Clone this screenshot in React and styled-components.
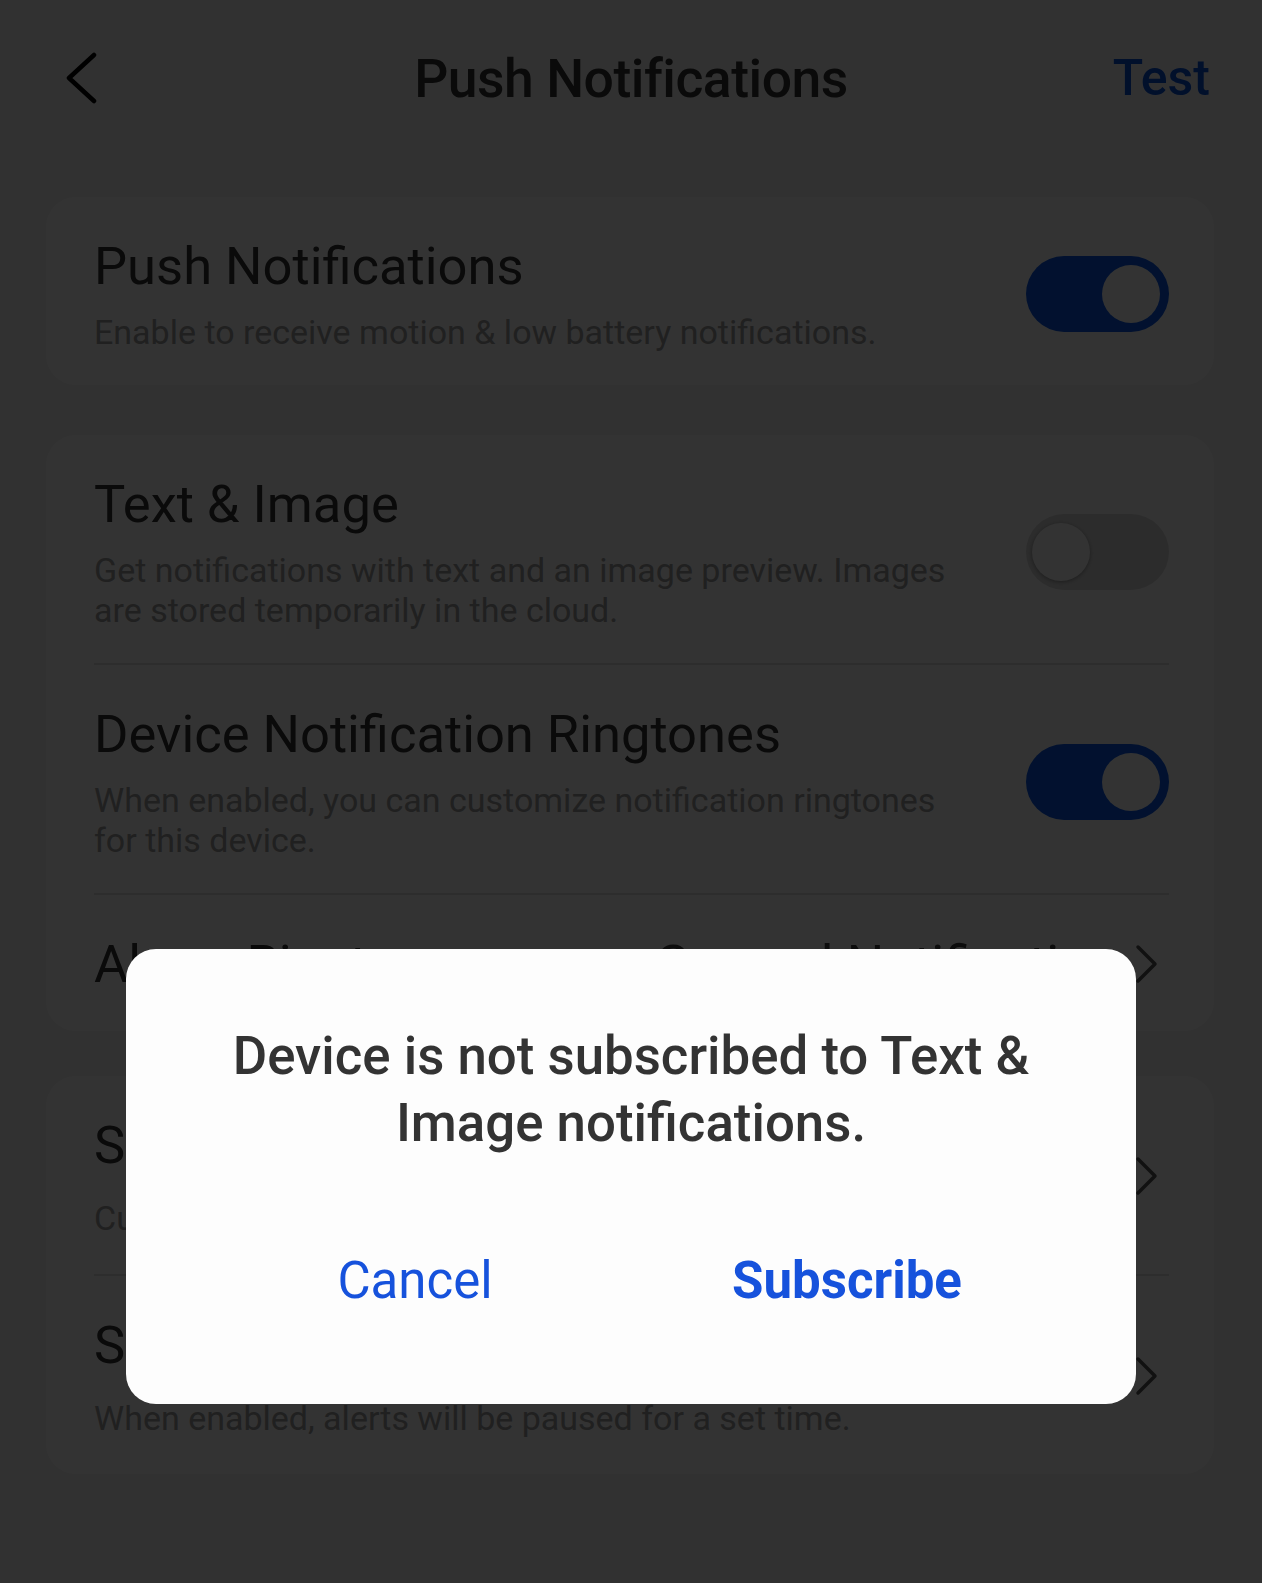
import React from "react";
import styled, { createGlobalStyle } from "styled-components";

const GlobalStyle = createGlobalStyle`
  body {
    margin: 0;
    font-family: Roboto, "Liberation Sans", sans-serif;
  }
`;

const Chevron = ({ left }) => (
  <svg width="36" height="56" viewBox="0 0 36 56" fill="none">
    <path
      d={left ? "M33 5 L8 28 L33 51" : "M8 11 L25 28 L8 45"}
      stroke={left ? "#000" : "#555"}
      strokeWidth={left ? 4.5 : 3.5}
      strokeLinecap="round"
      strokeLinejoin="round"
    />
  </svg>
);

const settings = [
  [
    {
      title: "Push Notifications",
      sub: "Enable to receive motion & low battery notifications.",
      on: true,
    },
  ],
  [
    {
      title: "Text & Image",
      sub: "Get notifications with text and an image preview. Images are stored temporarily in the cloud.",
      on: false,
    },
    {
      title: "Device Notification Ringtones",
      sub: "When enabled, you can customize notification ringtones for this device.",
      on: true,
    },
    { title: "Alarm Ringtone", value: "General Notification", link: true },
  ],
  [
    {
      title: "Schedule",
      sub: "Customize when you receive notifications.",
      link: true,
    },
    {
      title: "Snooze Alerts",
      sub: "When enabled, alerts will be paused for a set time.",
      link: true,
    },
  ],
];

const App = () => {
  return (
    <Page>
      <GlobalStyle />
      <Header>
        <BackButton>
          <Chevron left />
        </BackButton>
        <HeaderTitle>Push Notifications</HeaderTitle>
        <TestButton>Test</TestButton>
      </Header>

      <Content>
        {settings.map((group, i) => (
          <Card key={i} $first={i === 0}>
            {group.map((item) => (
              <Row key={item.title} $link={item.link}>
                <TextCol $gap={item.link ? 22 : 15}>
                  <RowTitle>{item.title}</RowTitle>
                  {item.sub && <RowSub>{item.sub}</RowSub>}
                </TextCol>
                {item.value && <Value>{item.value}</Value>}
                {item.link ? (
                  <ChevronBox>
                    <Chevron />
                  </ChevronBox>
                ) : (
                  <Toggle $on={item.on}>
                    <Knob $on={item.on} />
                  </Toggle>
                )}
              </Row>
            ))}
          </Card>
        ))}
      </Content>

      <Overlay>
        <Dialog>
          <Message>
            Device is not subscribed to Text &amp; Image notifications.
          </Message>
          <Actions>
            <ActionButton>Cancel</ActionButton>
            <ActionButton $primary>Subscribe</ActionButton>
          </Actions>
        </Dialog>
      </Overlay>
    </Page>
  );
};

export default App;

const Page = styled.div`
  position: relative;
  min-height: 1583px;
  background: #f5f5f5;
  overflow: hidden;
`;

const Header = styled.div`
  display: grid;
  grid-template-columns: 1fr auto 1fr;
  align-items: center;
  height: 156px;
  padding: 0 52px;
`;

const BackButton = styled.div`
  display: flex;
  align-items: center;
  margin-left: 9px;
`;

const HeaderTitle = styled.div`
  font-size: 53.5px;
  font-weight: 500;
  color: #333;
  letter-spacing: -0.5px;
`;

const TestButton = styled.div`
  justify-self: end;
  font-size: 50px;
  font-weight: 500;
  color: #0750d8;
`;

const Content = styled.div`
  display: flex;
  flex-direction: column;
  gap: 45px;
  padding: 41px 48px 0 46px;
`;

const Card = styled.div`
  background: #fff;
  border-radius: 30px;
  padding: 0 45px 0 48px;
  margin-bottom: ${(p) => (p.$first ? "5px" : "0")};
`;

const Row = styled.div`
  display: flex;
  align-items: center;
  padding: ${(p) => (p.$link ? "38px 0 36px" : "38px 0 33px")};

  & + & {
    border-top: 2px solid #e2e2e2;
  }
`;

const TextCol = styled.div`
  flex: 1;
  display: flex;
  flex-direction: column;
  gap: ${(p) => p.$gap}px;
  margin-right: 60px;
`;

const RowTitle = styled.div`
  font-size: 52.5px;
  line-height: 62px;
  color: #333;
  white-space: nowrap;
`;

const RowSub = styled.div`
  font-size: 34px;
  line-height: 40px;
  color: #a0a0a0;
`;

const Value = styled.div`
  font-size: 52.5px;
  line-height: 62px;
  color: #444;
  white-space: nowrap;
`;

const ChevronBox = styled.div`
  display: flex;
  align-items: center;
  margin-left: 12px;
  margin-right: 3px;
`;

const Toggle = styled.div`
  position: relative;
  flex-shrink: 0;
  width: 143px;
  height: 76px;
  border-radius: 38px;
  background: ${(p) => (p.$on ? "#0a58e8" : "#dcdcdc")};
`;

const Knob = styled.div`
  position: absolute;
  top: 9px;
  left: ${(p) => (p.$on ? "76px" : "6px")};
  width: 58px;
  height: 58px;
  border-radius: 50%;
  background: #fff;
  box-shadow: ${(p) => (p.$on ? "none" : "0 1px 4px rgba(0, 0, 0, 0.35)")};
`;

const Overlay = styled.div`
  position: absolute;
  inset: 0;
  display: flex;
  justify-content: center;
  align-items: flex-start;
  padding-top: 949px;
  background: rgba(0, 0, 0, 0.8);
`;

const Dialog = styled.div`
  width: 1010px;
  box-sizing: border-box;
  background: #fdfdfd;
  border-radius: 30px;
  padding: 74px 60px 63px;
`;

const Message = styled.div`
  font-size: 52.8px;
  line-height: 67px;
  font-weight: 500;
  color: #333;
  text-align: center;
`;

const Actions = styled.div`
  display: flex;
  margin-top: 64px;
  padding: 0 13px;
`;

const ActionButton = styled.div`
  flex: 1;
  text-align: center;
  padding: 30px 0;
  font-size: 51px;
  line-height: 60px;
  font-weight: ${(p) => (p.$primary ? 700 : 400)};
  color: #1652dc;
`;
